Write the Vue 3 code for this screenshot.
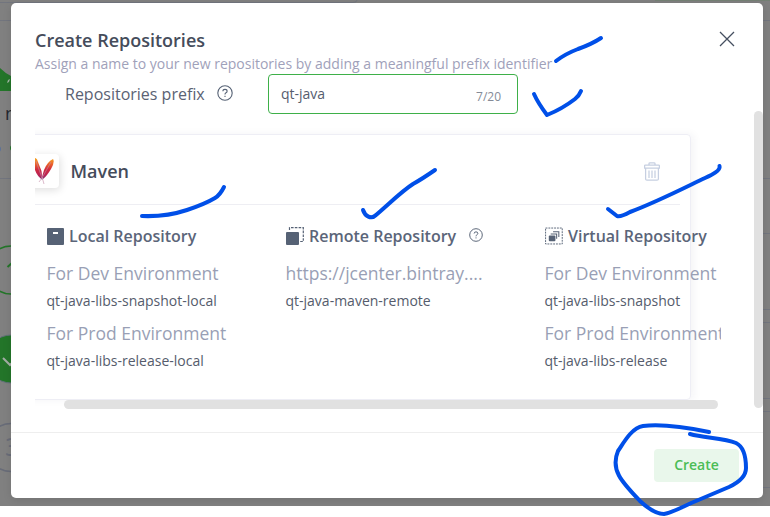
<script setup>
const prefix = 'qt-java'
const columns = [
  {
    kind: 'local',
    title: 'Local Repository',
    entries: [
      { label: 'For Dev Environment', name: 'qt-java-libs-snapshot-local' },
      { label: 'For Prod Environment', name: 'qt-java-libs-release-local' },
    ],
  },
  {
    kind: 'remote',
    title: 'Remote Repository',
    help: true,
    entries: [{ label: 'https://jcenter.bintray....', name: 'qt-java-maven-remote' }],
  },
  {
    kind: 'virtual',
    title: 'Virtual Repository',
    entries: [
      { label: 'For Dev Environment', name: 'qt-java-libs-snapshot' },
      { label: 'For Prod Environment', name: 'qt-java-libs-release' },
    ],
  },
]
</script>

<template>
  <div class="page">
    <svg class="behind" width="770" height="506" viewBox="0 0 770 506">
      <g fill="none" stroke="#72757e">
        <path d="M0 2.5H353Q357 2.5 357 0M0 20.5H11M0 178.5H11M763 20.5H770M763 178.5H770M763 233.5H770M763 309.5H770M763 322.5H770M763 398.5H770M763 411.5H770M763 487.5H770" />
      </g>
      <path d="M655 0H770V1H655Z" fill="#748074" />
      <path d="M0 68Q5 73 11 76V91H0Z" fill="#237529" />
      <path d="M7 83L8 80L10 79L9 82Z" fill="#a0b5a2" />
      <text x="5" y="119.5" class="ghost">n</text>
      <circle cx="-2" cy="149" r="3" fill="#5c7197" />
      <circle cx="13" cy="148" r="3" fill="#237529" />
      <circle cx="11" cy="270" r="24" fill="none" stroke="#237529" stroke-width="1.5" />
      <path d="M7.5 267L12 263" stroke="#237529" stroke-width="2" />
      <circle cx="11" cy="359" r="24" fill="#237529" stroke="#62707a" />
      <path d="M3 358L10 365L15 360" fill="none" stroke="#a4ada5" stroke-width="2" />
      <circle cx="11" cy="447.5" r="24" fill="none" stroke="#686c78" stroke-width="1.5" />
      <text x="5" y="456" class="ghost step">3</text>
    </svg>

    <section class="modal">
      <header class="head">
        <div>
          <h1>Create Repositories</h1>
          <p>Assign a name to your new repositories by adding a meaningful prefix identifier</p>
        </div>
        <svg class="close" width="16" height="16" viewBox="0 0 16 16">
          <path d="M1 1L15 15M15 1L1 15" fill="none" stroke="#454f60" stroke-width="1.3" />
        </svg>
      </header>

      <div class="prefix">
        <label>Repositories prefix</label>
        <svg class="help" width="16" height="16" viewBox="0 0 16 16">
          <circle cx="8" cy="8" r="7.2" />
          <path d="M5.9 6.3Q5.9 4.4 8 4.4T10.1 6.2Q10.1 7.2 9 7.8T8 9.5M8 10.7V11.9" />
        </svg>
        <div class="field"><span>{{ prefix }}</span><small>{{ prefix.length }}/20</small></div>
      </div>

      <div class="viewport">
        <article class="card">
          <div class="card-head">
            <div class="logo">
              <svg width="26" height="28" viewBox="0 0 26 28">
                <defs>
                  <linearGradient id="feather" gradientUnits="userSpaceOnUse" x1="0" y1="0" x2="0" y2="23">
                    <stop offset="0" stop-color="#f7a823" />
                    <stop offset=".3" stop-color="#e85a2c" />
                    <stop offset=".5" stop-color="#d02a40" />
                    <stop offset=".75" stop-color="#b92455" />
                    <stop offset="1" stop-color="#68327f" />
                  </linearGradient>
                </defs>
                <path d="M5 0Q9 -1 10 4L13.5 13L14.5 22Q9 18 7 12Z" fill="url(#feather)" />
                <path d="M25 1Q27 4 23 11Q19 18 15 21L14 19L16 12Q19 4 25 1Z" fill="url(#feather)" />
                <path d="M8 3L14 20M23 4L14 20L11 24M14 19L16 26" fill="none" stroke="#c58ba8" stroke-width=".6" />
              </svg>
            </div>
            <h2>Maven</h2>
            <svg class="trash" width="16" height="19" viewBox="0 0 16 19">
              <path d="M5 3V1.5Q5 .8 6 .8H10Q11 .8 11 1.5V3M1.2 3H14.8Q15.4 3 15.4 4V6H.6V4Q.6 3 1.2 3ZM1.6 6V17Q1.6 18.2 3 18.2H13Q14.4 18.2 14.4 17V6M5 8.5V16M8 8.5V16M11 8.5V16" />
            </svg>
          </div>

          <div class="columns">
            <section v-for="col in columns" :key="col.kind" class="column">
              <h3>
                <svg v-if="col.kind === 'local'" width="17" height="17" viewBox="0 0 17 17">
                  <rect width="17" height="17" rx="1" fill="#566275" />
                  <rect x="6" y="4" width="5" height="2" fill="#fff" />
                </svg>
                <svg v-else-if="col.kind === 'remote'" width="18" height="18" viewBox="0 0 18 18">
                  <rect y="5" width="13" height="13" rx="1" fill="#566275" />
                  <path d="M3.5 3V.7H17.3V14.5H14" fill="none" stroke="#566275" stroke-width="1.2" stroke-dasharray="2.6 1.2" />
                </svg>
                <svg v-else width="18" height="18" viewBox="0 0 19 18">
                  <rect x=".6" y=".6" width="17.6" height="16.8" fill="none" stroke="#566275" stroke-width="1" stroke-dasharray="2 1" />
                  <rect x="4" y="8.5" width="7" height="6" rx="1" fill="#566275" />
                  <path d="M6 6.8H12.3V12M8.5 4.6H14.6V10" fill="none" stroke="#566275" stroke-width="1.1" />
                </svg>
                <span>{{ col.title }}</span>
                <svg v-if="col.help" class="help small" width="14" height="14" viewBox="0 0 16 16">
                  <circle cx="8" cy="8" r="7.2" />
                  <path d="M5.9 6.3Q5.9 4.4 8 4.4T10.1 6.2Q10.1 7.2 9 7.8T8 9.5M8 10.7V11.9" />
                </svg>
              </h3>
              <dl v-for="entry in col.entries" :key="entry.name">
                <dt>{{ entry.label }}</dt>
                <dd>{{ entry.name }}</dd>
              </dl>
            </section>
          </div>
        </article>
        <div class="h-thumb"></div>
      </div>

      <footer><button>Create</button></footer>
      <div class="v-thumb"></div>
    </section>

    <svg class="ink" width="770" height="517" viewBox="0 0 770 517">
      <path d="M556 61Q565 54 578 49Q592 44 601 38" />
      <path d="M534 94Q538 103 547 115Q562 109 575 99Q579 96 581 91" />
      <path d="M142 216Q166 217 187 210Q205 204 215 198Q220 195 224 187" />
      <path d="M363 210C365 216 371 220 376 215C390 203 402 191 413 184Q422 179 435 170" />
      <path d="M608 209L617 216Q621 217 630 212C657 202 688 186 705 178Q721 171 719.5 166" />
      <path d="M709 432C680 426 659 424 643 426C631 428 623 444 618 451C610 470 622 482 640 501Q654 514 664 514C672 513 682 507 696 501L729 487Q746 479 746 468C746 453 742 446 736 443C724 438 704 438 690 434" />
    </svg>
  </div>
</template>

<style>
body { margin: 0; background: #fff; }
</style>
<style scoped>
* { box-sizing: border-box; }
.page { position: relative; width: 770px; height: 517px; padding: 3px 0 0 11px; overflow: hidden; font-family: "Open Sans", sans-serif; color: #454c5b; background: linear-gradient(#808080 506px, #fff 506px); }
.behind, .ink { position: absolute; left: 0; top: 0; }
.ghost { font-size: 18px; fill: #25282f; }
.ghost.step { font-size: 25px; fill: #686c78; }
.ink { pointer-events: none; }
.ink path { fill: none; stroke: #004fe8; stroke-width: 4; stroke-linecap: round; stroke-linejoin: round; }
.modal { position: relative; display: flex; flex-direction: column; width: 752px; height: 495px; background: #fff; border-radius: 5px; box-shadow: 0 2px 9px #0000001c; }
.head { display: flex; justify-content: space-between; height: 71px; padding: 25px 28px 0 24px; }
h1, h2, h3, p, dl, dt, dd { margin: 0; white-space: nowrap; }
h1 { font-size: 18px; line-height: 25px; font-weight: 600; }
p { font-size: 14px; line-height: 22px; color: #9fa1ba; }
.close { margin-top: 3px; }
.prefix { display: flex; height: 40px; padding-left: 54px; }
.prefix label { width: 152px; font-size: 16px; line-height: 40px; color: #5a6273; white-space: nowrap; }
.help { flex: none; margin-top: 11px; fill: none; stroke: #566275; stroke-width: 1.1; }
.field { display: flex; justify-content: space-between; width: 250px; height: 40px; margin-left: 35px; padding: 0 16px 0 12px; border: 1px solid #3eb049; border-radius: 4px; font-size: 14px; line-height: 38px; color: #565d6e; }
.field small { font-size: 12px; line-height: 43px; color: #858b97; }
.viewport { width: 686px; height: 315px; margin-left: 24px; padding-top: 20px; overflow: hidden; }
.card { width: 676px; height: 266px; margin-left: -20px; border: 1px solid #eeeef5; border-radius: 4px; box-shadow: 3px 0 8px #2c2c540d; }
.card-head { display: flex; align-items: center; height: 70px; margin-right: 10px; padding-right: 20px; border-bottom: 1px solid #eeeef3; }
.logo { flex: none; width: 34px; height: 34px; margin: 3px 0 0 9px; padding: 4px 0 0 3px; border-radius: 4px; background: #fff; box-shadow: 1px 2px 8px #00000022; }
.logo svg { display: block; }
h2 { flex: 1; margin: 2px 0 0 11.5px; font-size: 18px; line-height: 26px; font-weight: 600; }
.trash { margin-top: 3px; fill: none; stroke: #c6cfe1; stroke-width: 1.25; }
.columns { display: grid; grid-template-columns: 239px 259px 200px; padding: 22px 0 0 31px; }
h3 { display: flex; align-items: center; gap: 5px; height: 18px; margin-bottom: 14px; font-size: 16px; font-weight: 600; line-height: 18px; color: #5b6579; }
h3 svg { flex: none; }
.help.small { margin: -3px 0 0 8px; stroke-width: 1.1; }
dl { height: 60px; }
dt { margin-left: -.5px; font-size: 17.5px; line-height: 28px; color: #999fb5; }
dd { font-size: 14px; line-height: 26px; margin-left: -.5px; padding-top: 1px; color: #555c6c; }
.h-thumb { width: 654px; height: 9px; margin-left: 29px; border-radius: 5px; background: #e1e1e1; position: relative; }
footer { display: flex; justify-content: flex-end; margin-top: 3px; padding: 16px 24px 0 0; border-top: 1px solid #eee; }
button { width: 85px; height: 33px; padding: 0 0 2px; border: 0; border-radius: 4px; background: #e9f7eb; font: 600 14px "Open Sans", sans-serif; color: #4bbd56; }
.v-thumb { position: absolute; right: 0; top: 108px; width: 9px; height: 297px; border-radius: 5px; background: #e1e1e1; }
</style>
